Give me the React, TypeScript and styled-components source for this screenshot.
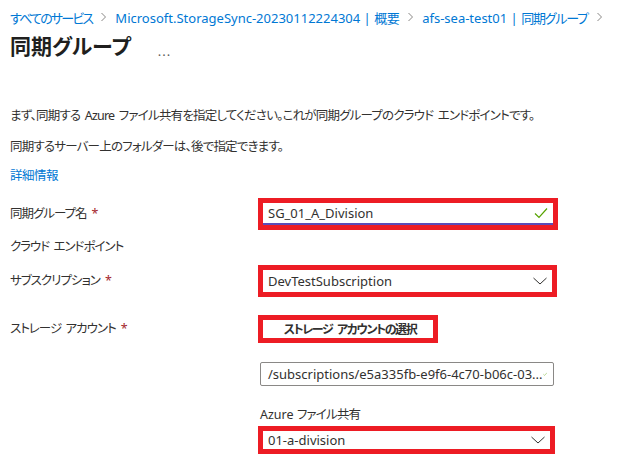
import React from "react";
import styled, { createGlobalStyle } from "styled-components";

const Global = createGlobalStyle`
  html, body { margin: 0; padding: 0; background: #ffffff; }
  body {
    font-family: "Noto Sans", "Noto Sans CJK JP", sans-serif;
    font-feature-settings: "palt";
    color: #323130;
    font-size: 13px;
  }
`;

const Page = styled.div`
  width: 625px;
  height: 470px;
  padding: 0 10px;
  box-sizing: border-box;
  overflow: hidden;
`;

const Ja = styled.span<{ $ls?: number }>`
  letter-spacing: ${(p) => p.$ls ?? -1}px;
`;

const Breadcrumb = styled.nav`
  height: 34px;
  display: flex;
  align-items: center;
  gap: 8px;
  white-space: nowrap;
  font-size: 13px;
`;

const Crumb = styled.a`
  color: #0078d4;
  text-decoration: none;
`;

const Sep = styled.span`
  display: inline-flex;
  color: #8a8886;
`;

const TitleRow = styled.div`
  height: 24px;
  display: flex;
  align-items: center;
`;

const Title = styled.h1`
  margin: 0;
  font-size: 21px;
  font-weight: 600;
  color: #201f1e;
  line-height: 24px;
`;

const More = styled.span`
  margin-left: 27px;
  margin-top: 10px;
  font-size: 13px;
  color: #605e5c;
  letter-spacing: 1px;
`;

const Para = styled.p<{ $mt: number }>`
  margin: ${(p) => p.$mt}px 0 0;
  line-height: 20px;
  font-size: 12.5px;
  letter-spacing: -0.8px;
  word-spacing: 2px;
  white-space: nowrap;
`;

const Link = styled.a<{ $mt: number }>`
  display: block;
  margin-top: ${(p) => p.$mt}px;
  line-height: 20px;
  font-size: 12.5px;
  letter-spacing: -0.5px;
  color: #0078d4;
  text-decoration: none;
`;

const Row = styled.div<{ $mt: number; $h: number }>`
  display: grid;
  grid-template-columns: 248px 1fr;
  align-items: center;
  margin-top: ${(p) => p.$mt}px;
  height: ${(p) => p.$h}px;
`;

const Label = styled.span`
  font-size: 12.5px;
  line-height: 20px;
  letter-spacing: -1px;
  word-spacing: 2px;
`;

const Req = styled.span`
  color: #a4262c;
  margin-left: 5px;
`;

const Highlight = styled.div<{ $w: number; $h: number }>`
  width: ${(p) => p.$w}px;
  height: ${(p) => p.$h}px;
  border: 5px solid #ed1c24;
  box-sizing: border-box;
  background: #fff;
  display: flex;
  align-items: stretch;
`;

const Field = styled.div<{ $underline?: boolean }>`
  flex: 1;
  display: flex;
  align-items: center;
  justify-content: space-between;
  padding: 0 5px 0 5px;
  font-size: 13px;
  color: #323130;
  border-bottom: ${(p) => (p.$underline ? "2px solid #5b4cb8" : "none")};
`;

const ButtonInner = styled.div`
  flex: 1;
  display: flex;
  align-items: center;
  justify-content: center;
  padding-left: 4px;
  font-size: 12px;
  font-weight: 600;
  letter-spacing: -1.4px;
  word-spacing: 3px;
  color: #323130;
`;

const TextBox = styled.div`
  width: 294px;
  height: 24px;
  margin-left: 2px;
  box-sizing: border-box;
  border: 1px solid #8a8886;
  border-radius: 2px;
  display: flex;
  align-items: center;
  justify-content: space-between;
  padding: 0 6px 0 7px;
  font-size: 13px;
  white-space: nowrap;
`;

const SubLabel = styled.div<{ $mt: number }>`
  margin: ${(p) => p.$mt}px 0 0 250px;
  line-height: 20px;
  font-size: 12.5px;
`;

const Stack = styled.div<{ $mt: number }>`
  margin: ${(p) => p.$mt}px 0 0 248px;
`;

const Check = () => (
  <svg width="14" height="12" viewBox="0 0 14 12">
    <path d="M1 6.5 L5 10.5 L13 1.5" fill="none" stroke="#57a300" strokeWidth="1.2" />
  </svg>
);

const Chevron = () => (
  <svg width="14" height="8" viewBox="0 0 14 8">
    <path d="M0.5 1 L7 7 L13.5 1" fill="none" stroke="#323130" strokeWidth="1" />
  </svg>
);

const SepIcon = () => (
  <svg width="7" height="10" viewBox="0 0 7 10">
    <path d="M1.5 1 L5.5 5 L1.5 9" fill="none" stroke="#8a8886" strokeWidth="1" />
  </svg>
);

export default function App() {
  return (
    <>
      <Global />
      <Page>
        <Breadcrumb>
          <Crumb>
            <Ja $ls={-1.8}>すべてのサービス</Ja>
          </Crumb>
          <Sep><SepIcon /></Sep>
          <Crumb>
            Microsoft.StorageSync-20230112224304 | <Ja $ls={-0.5}>概要</Ja>
          </Crumb>
          <Sep><SepIcon /></Sep>
          <Crumb>
            afs-sea-test01 | <Ja $ls={-1.2}>同期グループ</Ja>
          </Crumb>
          <Sep><SepIcon /></Sep>
        </Breadcrumb>
        <TitleRow>
          <Title>同期グループ</Title>
          <More>...</More>
        </TitleRow>
        <Para $mt={48}>
          まず、同期する Azure ファイル共有を指定してください。これが同期グループのクラウド エンドポイントです。
        </Para>
        <Para $mt={11}>同期するサーバー上のフォルダーは、後で指定できます。</Para>
        <Link $mt={9}>詳細情報</Link>

        <Row $mt={12} $h={32}>
          <Label>
            同期グループ名<Req>*</Req>
          </Label>
          <Highlight $w={300} $h={32}>
            <Field $underline>
              <span>SG_01_A_Division</span>
              <Check />
            </Field>
          </Highlight>
        </Row>

        <Row $mt={7} $h={20}>
          <Label>クラウド エンドポイント</Label>
          <span />
        </Row>

        <Row $mt={8} $h={32}>
          <Label>
            サブスクリプション<Req>*</Req>
          </Label>
          <Highlight $w={299} $h={32}>
            <Field>
              <span>DevTestSubscription</span>
              <Chevron />
            </Field>
          </Highlight>
        </Row>

        <Row $mt={18} $h={28}>
          <Label>
            ストレージ アカウント<Req>*</Req>
          </Label>
          <Highlight $w={180} $h={28}>
            <ButtonInner>ストレージ アカウントの選択</ButtonInner>
          </Highlight>
        </Row>

        <Stack $mt={19}>
          <TextBox>
            <span>/subscriptions/e5a335fb-e9f6-4c70-b06c-03...</span>
            <Check />
          </TextBox>
        </Stack>

        <SubLabel $mt={19}>
          Azure <Ja $ls={-0.8}>ファイル共有</Ja>
        </SubLabel>
        <Stack $mt={1}>
          <Highlight $w={297} $h={28}>
            <Field>
              <span>01-a-division</span>
              <Chevron />
            </Field>
          </Highlight>
        </Stack>
      </Page>
    </>
  );
}
